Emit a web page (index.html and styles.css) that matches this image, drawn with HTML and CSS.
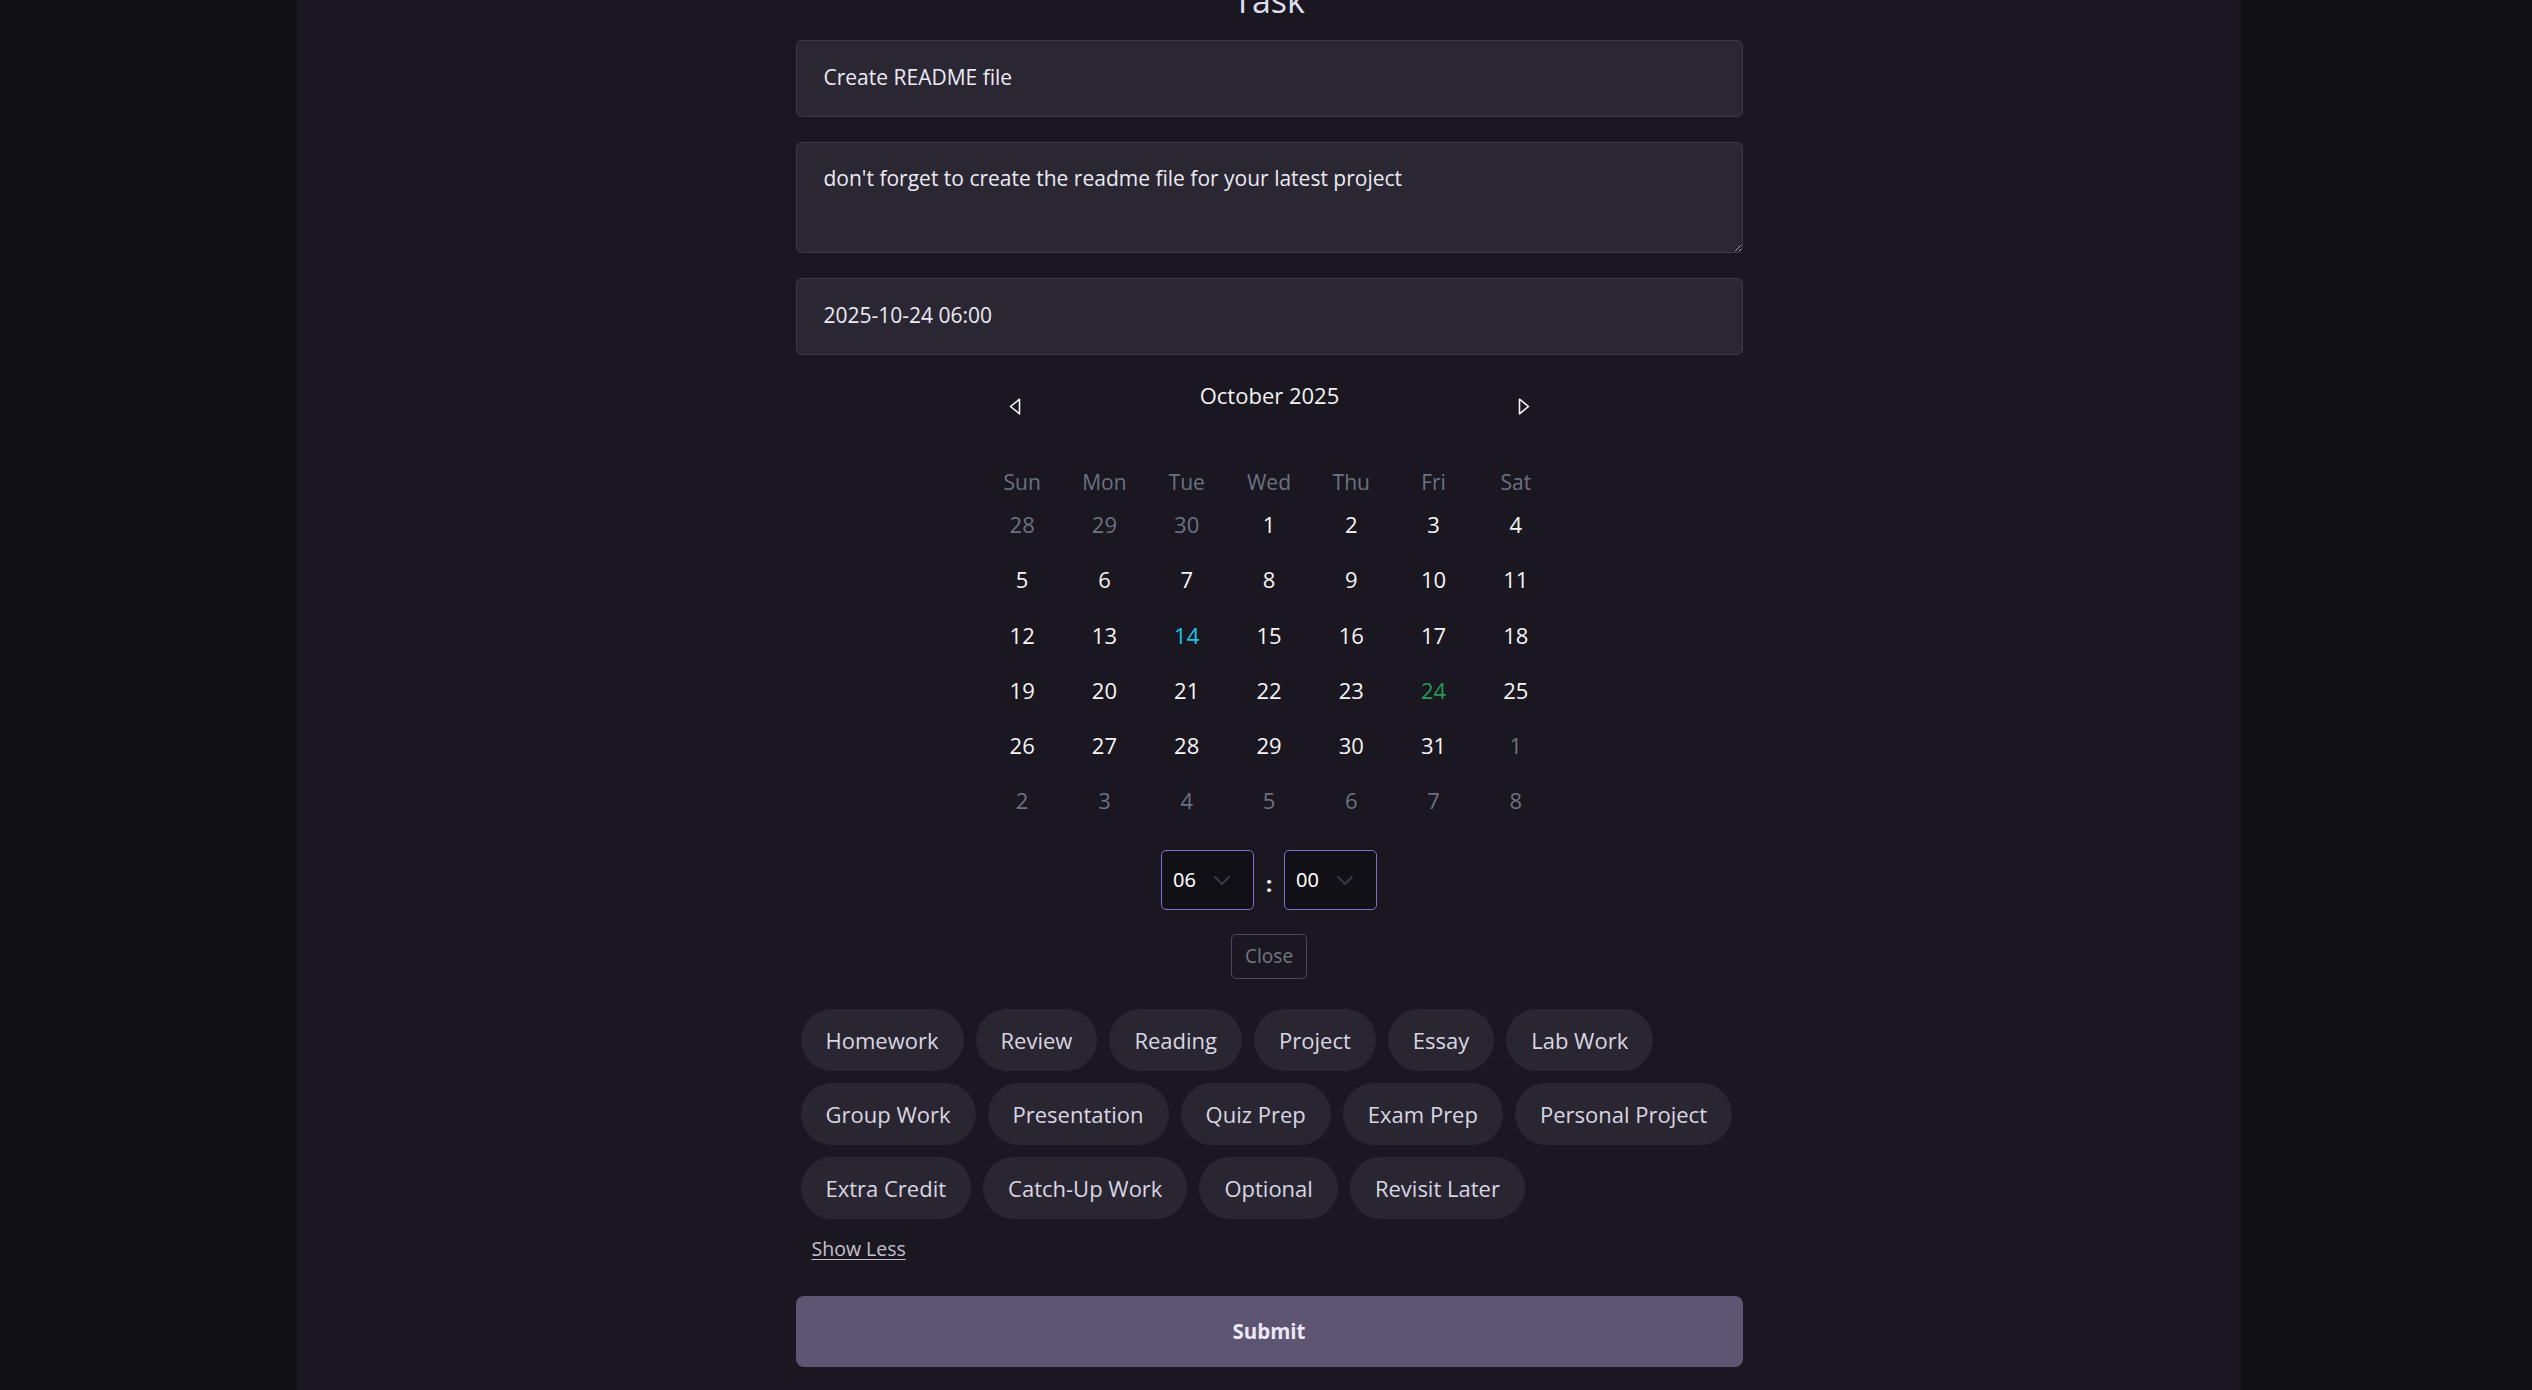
FILE: index.html
```html
<!DOCTYPE html>
<html lang="en">
<head>
<meta charset="utf-8">
<title>Task</title>
<link rel="stylesheet" href="styles.css">
</head>
<body>
<div class="panel">
  <form class="task-form">
    <h1 class="title">Task</h1>
    <input class="field" type="text" value="Create README file">
    <textarea class="field area">don't forget to create the readme file for your latest project</textarea>
    <input class="field" type="text" value="2025-10-24 06:00">

    <div class="calendar">
      <div class="cal-head">
        <button type="button" class="nav">
          <svg width="12" height="17" viewBox="0 0 12 17"><path d="M10.5 1.2 L1.5 8.5 L10.5 15.8 Z" fill="none" stroke="#f2f2f4" stroke-width="1.6" stroke-linejoin="round"/></svg>
        </button>
        <span class="month">October 2025</span>
        <button type="button" class="nav">
          <svg width="12" height="17" viewBox="0 0 12 17"><path d="M1.5 1.2 L10.5 8.5 L1.5 15.8 Z" fill="none" stroke="#f2f2f4" stroke-width="1.6" stroke-linejoin="round"/></svg>
        </button>
      </div>
      <div class="cal-grid">
        <span class="wd">Sun</span><span class="wd">Mon</span><span class="wd">Tue</span><span class="wd">Wed</span><span class="wd">Thu</span><span class="wd">Fri</span><span class="wd">Sat</span>
        <span class="day off">28</span><span class="day off">29</span><span class="day off">30</span><span class="day">1</span><span class="day">2</span><span class="day">3</span><span class="day">4</span>
        <span class="day">5</span><span class="day">6</span><span class="day">7</span><span class="day">8</span><span class="day">9</span><span class="day">10</span><span class="day">11</span>
        <span class="day">12</span><span class="day">13</span><span class="day today">14</span><span class="day">15</span><span class="day">16</span><span class="day">17</span><span class="day">18</span>
        <span class="day">19</span><span class="day">20</span><span class="day">21</span><span class="day">22</span><span class="day">23</span><span class="day selected">24</span><span class="day">25</span>
        <span class="day">26</span><span class="day">27</span><span class="day">28</span><span class="day">29</span><span class="day">30</span><span class="day">31</span><span class="day off">1</span>
        <span class="day off">2</span><span class="day off">3</span><span class="day off">4</span><span class="day off">5</span><span class="day off">6</span><span class="day off">7</span><span class="day off">8</span>
      </div>
    </div>

    <div class="time">
      <div class="select">
        <span>06</span>
        <svg width="18" height="11" viewBox="0 0 18 11"><path d="M1.5 1.5 L9 9 L16.5 1.5" fill="none" stroke="#3b3b42" stroke-width="1.8"/></svg>
      </div>
      <span class="colon">:</span>
      <div class="select">
        <span>00</span>
        <svg width="18" height="11" viewBox="0 0 18 11"><path d="M1.5 1.5 L9 9 L16.5 1.5" fill="none" stroke="#3b3b42" stroke-width="1.8"/></svg>
      </div>
    </div>

    <button type="button" class="close">Close</button>

    <div class="tags">
      <span class="tag">Homework</span>
      <span class="tag">Review</span>
      <span class="tag">Reading</span>
      <span class="tag">Project</span>
      <span class="tag">Essay</span>
      <span class="tag">Lab Work</span>
      <span class="tag">Group Work</span>
      <span class="tag">Presentation</span>
      <span class="tag">Quiz Prep</span>
      <span class="tag">Exam Prep</span>
      <span class="tag">Personal Project</span>
      <span class="tag">Extra Credit</span>
      <span class="tag">Catch-Up Work</span>
      <span class="tag">Optional</span>
      <span class="tag">Revisit Later</span>
    </div>

    <a class="show-less" href="#">Show Less</a>

    <button type="submit" class="submit">Submit</button>
  </form>
</div>
</body>
</html>
```

FILE: styles.css
```css
* { box-sizing: border-box; }

html, body {
  margin: 0;
  height: 1390px;
  overflow: hidden;
  background: #101015;
  font-family: "Open Sans", "Noto Sans", sans-serif;
  color: #eceaf3;
}

.panel {
  width: 1944px;
  height: 1390px;
  margin-left: 297px;
  background: #1a1720;
}

.task-form {
  width: 947px;
  margin: 0 auto;
  display: flex;
  flex-direction: column;
}

.title {
  margin: -20px 0 20px;
  height: 40px;
  font-size: 34px;
  line-height: 40px;
  font-weight: 400;
  text-align: center;
  color: #dedcf0;
}

.field {
  display: block;
  width: 100%;
  height: 77px;
  padding: 20px 27px 24px;
  background: #2a2733;
  border: 1px solid #3d3a45;
  border-radius: 6px;
  font-family: inherit;
  font-size: 21px;
  line-height: 31px;
  color: #eceaf3;
  outline: none;
}

.area {
  height: 111px;
  margin-top: 25px;
  margin-bottom: 25px;
  resize: vertical;
}

/* Calendar */
.calendar {
  width: 576px;
  margin: 25px auto 0;
}

.cal-head {
  display: flex;
  justify-content: space-between;
  align-items: flex-start;
  height: 50px;
  padding: 0 27px 0 28px;
}

.nav {
  margin-top: 18px;
  padding: 0;
  border: 0;
  background: none;
  display: flex;
}

.month {
  font-size: 22px;
  line-height: 30px;
  color: #f2f2f4;
}

.cal-grid {
  margin-top: 37px;
  display: grid;
  grid-template-columns: repeat(7, 1fr);
  grid-template-rows: 30px repeat(6, 55.3px);
  text-align: center;
}

.wd {
  font-size: 21px;
  line-height: 30px;
  color: #6b7280;
}

.day {
  font-size: 22px;
  line-height: 55.3px;
  color: #f5f5f7;
}

.day.off { color: #6b7280; }
.day.today { color: #1fc3ea; }
.day.selected { color: #1f9d55; }

/* Time */
.time {
  margin-top: 21px;
  display: flex;
  justify-content: center;
  align-items: center;
}

.select {
  width: 93px;
  height: 60px;
  display: flex;
  align-items: center;
  justify-content: space-between;
  padding: 0 22px 0 11px;
  background: #111016;
  border: 1px solid #7f6dd6;
  border-radius: 5px;
  font-family: "Noto Sans", sans-serif;
  font-size: 20px;
  color: #ffffff;
}

.select svg { margin-top: 2px; }

.colon {
  width: 30px;
  text-align: center;
  font-family: "Noto Sans", sans-serif;
  font-size: 22px;
  font-weight: 700;
  color: #ffffff;
  padding-top: 6px;
}

.close {
  align-self: center;
  margin-top: 24px;
  width: 76px;
  height: 45px;
  padding: 0;
  background: transparent;
  border: 1px solid #4a4a53;
  border-radius: 5px;
  font-family: "Noto Sans", sans-serif;
  font-size: 19px;
  color: #6e727b;
}

/* Tags */
.tags {
  margin-top: 30px;
  padding: 0 5px;
  display: flex;
  flex-wrap: wrap;
  gap: 12px 12px;
}

.tag {
  height: 62px;
  padding: 0 25px;
  display: flex;
  align-items: center;
  background: #292632;
  border-radius: 31px;
  font-size: 22px;
  color: #d9d6e2;
}

.show-less {
  align-self: flex-start;
  margin: 17px 0 0 16px;
  font-size: 19.5px;
  line-height: 26px;
  color: #c4c0cf;
  text-decoration: underline;
  text-underline-offset: 3px;
}

.submit {
  margin-top: 34px;
  height: 71px;
  width: 100%;
  background: #5d5572;
  border: 0;
  border-radius: 8px;
  font-family: inherit;
  font-size: 20.5px;
  font-weight: 700;
  color: #ece8f6;
}
```
